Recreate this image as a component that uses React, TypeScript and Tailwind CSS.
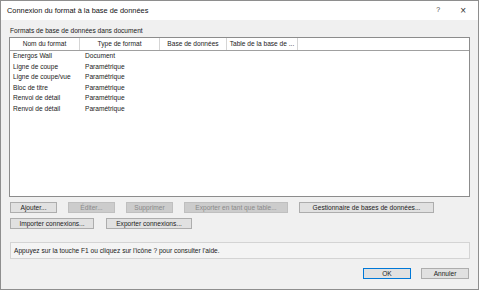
import React from "react";

const columns = [
  { label: "Nom du format", width: "w-[70px]" },
  { label: "Type de format", width: "w-[80px]" },
  { label: "Base de données", width: "w-[67px]" },
  { label: "Table de la base de ...", width: "w-[71px]" },
];

const rows = [
  ["Energos Wall", "Document"],
  ["Ligne de coupe", "Paramétrique"],
  ["Ligne de coupe/vue", "Paramétrique"],
  ["Bloc de titre", "Paramétrique"],
  ["Renvoi de détail", "Paramétrique"],
  ["Renvoi de détail", "Paramétrique"],
];

function Btn({ label, width, disabled = false, primary = false }: { label: string; width: string; disabled?: boolean; primary?: boolean }) {
  return (
    <div
      className={`${width} h-[11px] flex items-center justify-center border ${
        disabled
          ? "bg-[#cccccc] border-[#bfbfbf] text-[#8a8a8a]"
          : primary
          ? "bg-[#e1e1e1] border-[#0078d7] text-[#222]"
          : "bg-[#e1e1e1] border-[#adadad] text-[#222]"
      }`}
    >
      {label}
    </div>
  );
}

export default function App() {
  return (
    <div
      className="w-[479px] h-[290px] flex flex-col border border-[#8e8e8e] bg-[#f0f0f0] text-[6.6px] text-[#1a1a1a] overflow-hidden"
      style={{ fontFamily: '"Liberation Sans", Arial, sans-serif' }}
    >
      <div className="h-[19px] shrink-0 bg-white flex items-center pl-[6px] pr-[12px]">
        <span className="text-[7.4px] text-[#111]">Connexion du format à la base de données</span>
        <span className="ml-auto text-[7px] text-[#444]">?</span>
        <span className="ml-[20px] text-[10px] font-light text-[#333] leading-none">×</span>
      </div>

      <div className="flex-1 flex flex-col px-[8px]">
        <div className="mt-[6px] h-[9px] leading-[9px] pl-[1px]">Formats de base de données dans document</div>

        <div className="mt-[2px] h-[160px] border border-[#8c8c8c] bg-white flex flex-col">
          <div className="h-[13px] flex border-b border-[#a0a0a0] bg-white">
            {columns.map((c) => (
              <div key={c.label} className={`${c.width} flex items-center justify-center border-r border-[#d5d5d5] text-[#222]`}>
                {c.label}
              </div>
            ))}
          </div>
          <div className="flex flex-col">
            {rows.map((r, i) => (
              <div key={i} className="h-[10.5px] flex items-center">
                <div className="w-[70px] pl-[3px]">{r[0]}</div>
                <div className="w-[80px] pl-[5px]">{r[1]}</div>
              </div>
            ))}
          </div>
        </div>

        <div className="mt-[5px] flex pl-[1px] gap-[11px]">
          <Btn label="Ajouter..." width="w-[47px]" />
          <Btn label="Éditer..." width="w-[47px]" disabled />
          <Btn label="Supprimer" width="w-[47px]" disabled />
          <Btn label="Exporter en tant que table..." width="w-[104px]" disabled />
          <Btn label="Gestionnaire de bases de données..." width="w-[135px]" />
        </div>
        <div className="mt-[5px] flex pl-[1px] gap-[12px]">
          <Btn label="Importer connexions..." width="w-[84px]" />
          <Btn label="Exporter connexions..." width="w-[86px]" />
        </div>

        <div className="mt-[13px] ml-[1px] w-[460px] h-[17px] flex items-center pl-[3px] border border-[#d4d4d4] bg-[#f4f4f4]">
          Appuyez sur la touche F1 ou cliquez sur l'icône ? pour consulter l'aide.
        </div>

        <div className="mt-[9px] flex justify-end pr-[1px] gap-[10px]">
          <Btn label="OK" width="w-[48px]" primary />
          <Btn label="Annuler" width="w-[48px]" />
        </div>
      </div>
    </div>
  );
}
